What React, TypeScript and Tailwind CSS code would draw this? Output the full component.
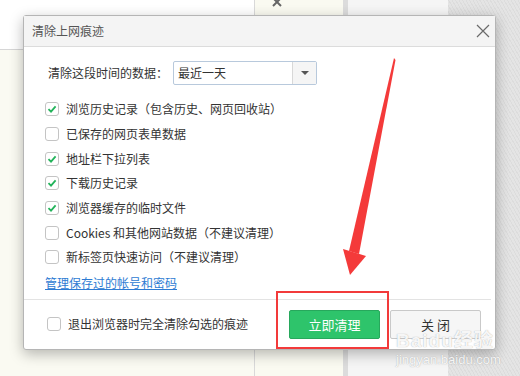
import type { ReactNode } from 'react';

const font = { fontFamily: '"Microsoft YaHei", "Noto Sans CJK SC", "Noto Sans", sans-serif' };

const rows: { label: string; checked: boolean }[] = [
  { label: '浏览历史记录（包含历史、网页回收站）', checked: true },
  { label: '已保存的网页表单数据', checked: false },
  { label: '地址栏下拉列表', checked: true },
  { label: '下载历史记录', checked: true },
  { label: '浏览器缓存的临时文件', checked: true },
  { label: 'Cookies 和其他网站数据（不建议清理）', checked: false },
  { label: '新标签页快速访问（不建议清理）', checked: false },
];

function CheckBox({ checked }: { checked: boolean }) {
  return (
    <span className="flex h-[14px] w-[14px] shrink-0 items-center justify-center rounded-[3px] border border-[#c4c4c4] bg-white">
      {checked && (
        <svg width="10" height="10" viewBox="0 0 10 10">
          <path d="M1.5 5.2 L4 7.6 L8.6 2.4" fill="none" stroke="#22b35a" strokeWidth="1.8" />
        </svg>
      )}
    </span>
  );
}

function Row({ children }: { children: ReactNode }) {
  return <div className="flex h-[24.7px] items-center gap-[7px]">{children}</div>;
}

export default function App() {
  return (
    <div className="relative h-[376px] w-[520px] overflow-hidden" style={font}>
      {/* page behind the dialog */}
      <div className="flex h-full w-full">
        <div className="flex w-[255px] flex-col border-r border-[#d9d9d9]">
          <div className="h-[50px] border-b border-[#d6d6d6] bg-white" />
          <div className="flex-1 bg-[#fafaf2]" />
        </div>
        <div className="w-[88px] bg-[#fafaf1]">
          <svg width="14" height="10" viewBox="0 0 14 10" className="ml-[16px] mt-[-2px]">
            <path d="M2 0 L10 8 M10 0 L2 8" stroke="#666" strokeWidth="2" />
          </svg>
        </div>
        <div className="w-[5px] bg-[#dcdcdc]" />
        <div className="w-[100px] bg-[#f5f5f5]" />
        <div className="flex-1 bg-[repeating-linear-gradient(60deg,#e4e4e4_0px,#e4e4e4_2px,#dcdcdc_2px,#dcdcdc_3px)]" />
      </div>

      {/* dialog */}
      <div className="absolute left-[23px] top-[15px] flex h-[335px] w-[473px] flex-col rounded-[3px] border border-[#b5b5b5] bg-white shadow-[0_4px_14px_rgba(0,0,0,0.28)]">
        <div className="flex h-[31px] shrink-0 items-center justify-between border-b border-[#dcdcdc] bg-[#f4f4f4] pl-[8px] pr-[4px]">
          <span className="text-[12px] text-[#555]">清除上网痕迹</span>
          <svg width="16" height="16" viewBox="0 0 16 16">
            <path d="M2 2 L14 14 M14 2 L2 14" stroke="#6a6a6a" strokeWidth="1.2" />
          </svg>
        </div>

        <div className="flex flex-col pl-[21px] pt-[14px] pb-[3px] text-[12px] text-[#333]">
          <div className="flex h-[24px] items-center">
            <span className="ml-[3px] w-[125px] whitespace-nowrap">清除这段时间的数据：</span>
            <div className="flex h-[24px] w-[144px] items-center rounded-[2px] border border-[#b8c9dc]">
              <span className="flex-1 pl-[4px] text-[12px] text-[#333]">最近一天</span>
              <span className="flex h-full w-[24px] items-center justify-center border-l border-[#d8d8d8] bg-[#f5f5f5]">
                <svg width="8" height="4" viewBox="0 0 8 4">
                  <path d="M0 0 H8 L4 4 Z" fill="#555" />
                </svg>
              </span>
            </div>
          </div>

          <div className="mt-[12px] flex flex-col">
            {rows.map((r) => (
              <Row key={r.label}>
                <CheckBox checked={r.checked} />
                <span className="whitespace-nowrap">{r.label}</span>
              </Row>
            ))}
          </div>

          <div className="flex h-[26px] items-center">
            <span className="text-[12px] text-[#2d7bd3] underline">管理保存过的帐号和密码</span>
          </div>
        </div>

        <div className="mr-[4px] flex flex-1 items-center justify-between border-t border-[#e3e3e3] pl-[23px] pr-[10px]">
          <div className="flex items-center gap-[7px] text-[12px] text-[#333]">
            <CheckBox checked={false} />
            <span>退出浏览器时完全清除勾选的痕迹</span>
          </div>
          <div className="flex gap-[10px]">
            <button className="flex h-[29px] w-[91px] items-center justify-center rounded-[2px] border border-[#27a85c] bg-[#2ec46b] text-[13px] text-white">
              立即清理
            </button>
            <button className="flex h-[29px] w-[91px] items-center justify-center rounded-[2px] border border-[#c9c9c9] bg-[#f6f6f6] text-[13px] text-[#333]">
              关 闭
            </button>
          </div>
        </div>
      </div>

      {/* annotation: red arrow */}
      <svg className="absolute left-0 top-0" width="520" height="376" viewBox="0 0 520 376">
        <polygon points="394,58 395.5,60 359,254 349,251" fill="#f43a3a" />
        <polygon points="343,249 366,256 350,275" fill="#f43a3a" />
      </svg>

      {/* annotation: red box */}
      <div className="absolute left-[276px] top-[291px] h-[58px] w-[113px] border-2 border-[#f23a3a]" />

      {/* watermark */}
      <div className="absolute left-[396px] top-[330px] flex flex-col text-white/90 [text-shadow:0_0_1px_rgba(120,120,120,0.7)]">
        <span className="text-[19px] font-bold leading-[22px] tracking-[1px]" style={{ fontFamily: '"Liberation Sans", "Noto Sans CJK SC", sans-serif' }}>
          Baidu经验
        </span>
        <span className="text-[13px] leading-[16px]" style={{ fontFamily: '"Liberation Sans", sans-serif' }}>
          jingyan.baidu.com
        </span>
      </div>
    </div>
  );
}
